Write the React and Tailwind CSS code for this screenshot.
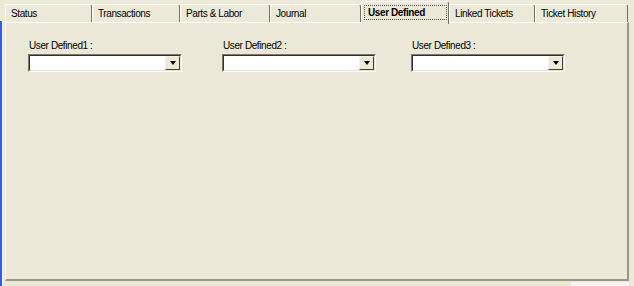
const tabs = [
  { label: 'Status', w: 87 },
  { label: 'Transactions', w: 88 },
  { label: 'Parts & Labor', w: 90 },
  { label: 'Journal', w: 91 },
  { label: 'User Defined', w: 88, active: true },
  { label: 'Linked Tickets', w: 86 },
  { label: 'Ticket History', w: 93 },
];

const fields = [
  { label: 'User Defined1 :', ml: 'ml-[22px]' },
  { label: 'User Defined2 :', ml: 'ml-[40px]' },
  { label: 'User Defined3 :', ml: 'ml-[35px]' },
];

const Tab = ({ label, w, active }) => {
  if (active) {
    return (
      <div
        style={{ width: w }}
        className="relative z-10 mt-[1px] h-[23px] shrink-0 rounded-tr-[3px] border-t border-l border-r border-t-white border-l-white border-r-[#716f64] bg-[#ebe8d7] pl-[2px] pt-[3px]"
      >
        <div className="flex h-[15px] w-[83px] items-center border border-dotted border-[#555] pl-[3px] font-bold text-black">
          {label}
        </div>
      </div>
    );
  }
  return (
    <div
      style={{ width: w }}
      className="mt-[4px] flex h-[18px] shrink-0 items-center rounded-tr-[3px] border-t border-l border-r border-t-white border-l-white border-r-[#716f64] pl-[5px] text-black"
    >
      {label}
    </div>
  );
};

const Combo = () => (
  <div className="flex h-[18px] w-[154px] border-t border-l border-b border-r border-t-[#7a7869] border-l-[#7a7869] border-b-white border-r-white">
    <div className="flex flex-1 border-t border-l border-b border-r border-t-[#303030] border-l-[#303030] border-b-[#e4e1d0] border-r-[#e4e1d0] bg-white">
      <div className="flex-1" />
      <div className="flex w-[15px] items-center justify-center border-t border-l border-b border-r border-t-[#f4f2e8] border-l-[#f4f2e8] border-b-[#404040] border-r-[#404040] bg-[#ece9d8]">
        <div className="h-0 w-0 border-l-[3px] border-r-[3px] border-t-[4px] border-l-transparent border-r-transparent border-t-black" />
      </div>
    </div>
  </div>
);

export default function App() {
  return (
    <div className="relative flex h-[286px] w-[634px] overflow-hidden bg-[#ece9d8] font-['Liberation_Sans',Arial,sans-serif] text-[10px] tracking-[-0.4px]">
      {/* left window edge */}
      <div className="mt-[21px] flex h-[265px] shrink-0">
        <div className="w-[2px] bg-[#2b5fe4]" />
        <div className="w-[1px] bg-[#f5f4ee]" />
      </div>

      <div className="ml-[2px] flex w-[624px] flex-col">
        {/* tab strip */}
        <div className="flex h-[23px]">
          {tabs.map((t) => (
            <Tab key={t.label} {...t} />
          ))}
        </div>

        {/* panel */}
        <div className="-mt-[1px] h-[259px] border-t border-l border-r-2 border-b-2 border-t-white border-l-white border-r-[#9a9789] border-b-[#9a9789] bg-[#ebe8d7]">
          <div className="flex pt-[17px]">
            {fields.map((f) => (
              <div key={f.label} className={`${f.ml} flex flex-col`}>
                <div className="h-[14px] pl-[1px] leading-[12px] text-black">{f.label}</div>
                <Combo />
              </div>
            ))}
          </div>
        </div>

        {/* below panel */}
        <div className="flex flex-1">
          <div className="flex-1" />
          <div className="mt-[1px] w-[58px] bg-[#f6f5ef]" />
        </div>
      </div>
    </div>
  );
}
